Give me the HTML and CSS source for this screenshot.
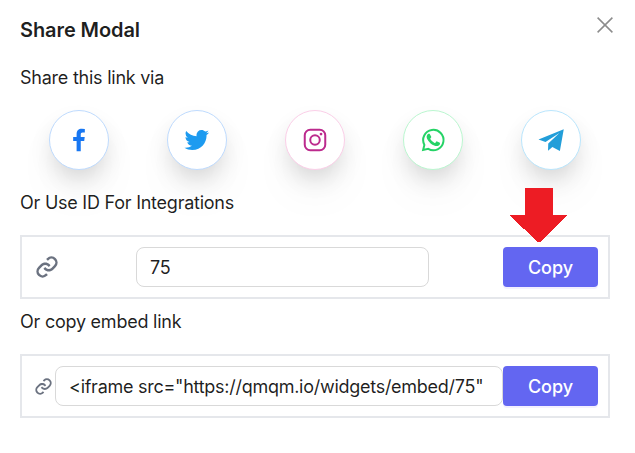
FILE: index.html
```
<!DOCTYPE html>
<html lang="en">
<head>
  <meta charset="UTF-8">
  <title>Share Modal</title>
  <link rel="stylesheet" href="styles.css">
</head>
<body>
  <div class="modal">
    <div class="modal-header">
      <h1>Share Modal</h1>
      <button class="close-btn" aria-label="Close">
        <svg width="16" height="16" viewBox="0 0 16 16"><path d="M.6.6l14.8 14.8M15.4.6L.6 15.4"/></svg>
      </button>
    </div>

    <p class="label">Share this link via</p>
    <div class="social">
      <a class="icon facebook" href="#">
        <svg viewBox="0 0 24 24"><path d="M13.397 20.997v-8.196h2.765l.411-3.209h-3.176V7.548c0-.926.258-1.56 1.587-1.56h1.684V3.127A22.336 22.336 0 0 0 14.201 3c-2.444 0-4.122 1.492-4.122 4.231v2.355H7.332v3.209h2.753v8.202h3.312z"/></svg>
      </a>
      <a class="icon twitter" href="#">
        <svg viewBox="0 0 24 24"><path d="M19.633 7.997c.013.175.013.349.013.523 0 5.325-4.053 11.461-11.46 11.461-2.282 0-4.402-.661-6.186-1.809.324.037.636.05.973.05a8.07 8.07 0 0 0 5.001-1.721 4.036 4.036 0 0 1-3.767-2.793c.249.037.499.062.761.062.361 0 .724-.05 1.061-.137a4.027 4.027 0 0 1-3.23-3.953v-.05c.537.299 1.16.486 1.82.511a4.022 4.022 0 0 1-1.796-3.354c0-.748.199-1.434.548-2.032a11.457 11.457 0 0 0 8.306 4.215c-.062-.3-.1-.611-.1-.923a4.026 4.026 0 0 1 4.028-4.028c1.16 0 2.207.486 2.943 1.272a7.957 7.957 0 0 0 2.556-.973 4.02 4.02 0 0 1-1.771 2.22 8.073 8.073 0 0 0 2.319-.624 8.645 8.645 0 0 1-2.019 2.083z"/></svg>
      </a>
      <a class="icon instagram" href="#">
        <svg viewBox="0 0 24 24">
          <rect class="line" x="3.8" y="3.8" width="16.4" height="16.4" rx="4.4"/>
          <circle class="line" cx="12" cy="12" r="3.8"/>
          <circle cx="16.8" cy="7.2" r="1.1"/>
        </svg>
      </a>
      <a class="icon whatsapp" href="#">
        <svg viewBox="0 0 24 24">
          <path class="line" d="M4.1 20l1-4.1A8.15 8.15 0 1 1 8.2 19.1z"/>
          <path d="M9.6 7.5c-.2-.5-.4-.5-.6-.5h-.5c-.2 0-.5.1-.7.3-.3.3-.9.9-.9 2.1s.9 2.5 1.1 2.7c.1.2 1.8 2.9 4.5 4 2.2.9 2.7.7 3.2.6.5 0 1.5-.6 1.7-1.2.2-.6.2-1.1.2-1.2-.1-.2-.3-.2-.5-.3l-1.8-.9c-.2-.1-.4-.1-.6.1l-.8 1c-.1.2-.3.2-.6.1a7 7 0 0 1-3.5-3.1c-.1-.2 0-.4.1-.5l.4-.5.3-.4v-.5z"/>
        </svg>
      </a>
      <a class="icon telegram" href="#">
        <svg viewBox="0 0 24 24"><path d="M22.2 3.4L2 11.5l5.600 2.100L18.700 6.300 9.800 14.700l-.2 5.800 3.500-2.900 6 3.200z"/></svg>
      </a>
    </div>

    <p class="label">Or Use ID For Integrations</p>
    <div class="field">
      <svg class="link-icon" viewBox="0 0 24 24">
        <path d="M8.465 11.293c1.133-1.133 3.109-1.133 4.242 0l.707.707 1.414-1.414-.707-.707c-.943-.944-2.199-1.465-3.535-1.465s-2.592.521-3.535 1.465L4.929 12a5.008 5.008 0 0 0 0 7.071 4.983 4.983 0 0 0 3.535 1.462A4.982 4.982 0 0 0 12 19.071l.707-.707-1.414-1.414-.707.707a3.007 3.007 0 0 1-4.243 0 3.005 3.005 0 0 1 0-4.243l2.122-2.121z"/>
        <path d="m12 4.929-.707.707 1.414 1.414.707-.707a3.007 3.007 0 0 1 4.243 0 3.005 3.005 0 0 1 0 4.243l-2.122 2.121c-1.133 1.133-3.109 1.133-4.242 0L10.586 12l-1.414 1.414.707.707c.943.944 2.199 1.465 3.535 1.465s2.592-.521 3.535-1.465L19.071 12a5.008 5.008 0 0 0 0-7.071 5.006 5.006 0 0 0-7.071 0z"/>
      </svg>
      <input class="id-input" type="text" value="75">
      <button class="copy-btn">Copy</button>
      <!-- points at the first copy button -->
      <svg class="arrow" width="57" height="54" viewBox="0 0 57 54"><path d="M15 0h28v27h14v1L30 54h-2L0 28v-1h15z"/></svg>
    </div>

    <p class="label embed-label">Or copy embed link</p>
    <div class="field">
      <svg class="link-icon small" viewBox="0 0 24 24">
        <path d="M8.465 11.293c1.133-1.133 3.109-1.133 4.242 0l.707.707 1.414-1.414-.707-.707c-.943-.944-2.199-1.465-3.535-1.465s-2.592.521-3.535 1.465L4.929 12a5.008 5.008 0 0 0 0 7.071 4.983 4.983 0 0 0 3.535 1.462A4.982 4.982 0 0 0 12 19.071l.707-.707-1.414-1.414-.707.707a3.007 3.007 0 0 1-4.243 0 3.005 3.005 0 0 1 0-4.243l2.122-2.121z"/>
        <path d="m12 4.929-.707.707 1.414 1.414.707-.707a3.007 3.007 0 0 1 4.243 0 3.005 3.005 0 0 1 0 4.243l-2.122 2.121c-1.133 1.133-3.109 1.133-4.242 0L10.586 12l-1.414 1.414.707.707c.943.944 2.199 1.465 3.535 1.465s2.592-.521 3.535-1.465L19.071 12a5.008 5.008 0 0 0 0-7.071 5.006 5.006 0 0 0-7.071 0z"/>
      </svg>
      <input class="embed-input" type="text" value="&lt;iframe src=&quot;https://qmqm.io/widgets/embed/75&quot;">
      <button class="copy-btn">Copy</button>
    </div>
  </div>
</body>
</html>
```
FILE: styles.css
```
* {
  box-sizing: border-box;
}

body {
  margin: 0;
  background: #fff;
  color: rgba(0, 0, 0, 0.88);
  font-family: Inter, sans-serif;
  font-size: 18px;
  line-height: 28px;
}

.modal {
  padding: 16px 25px 0 20px;
}

.modal-header {
  display: flex;
  justify-content: space-between;
  height: 48px;
}

.modal-header h1 {
  margin: 0;
  font-size: 20px;
  font-weight: 600;
  line-height: 28px;
  letter-spacing: -0.09px;
}

.close-btn {
  width: 16px;
  height: 16px;
  margin: 1px -3px 0 0;
  padding: 0;
  border: none;
  background: none;
  cursor: pointer;
}

.close-btn svg {
  display: block;
  fill: none;
  stroke: #8c8c8c;
  stroke-width: 1.5;
}

.label {
  margin: 0;
  height: 28px;
  letter-spacing: -0.24px;
}

.social {
  display: flex;
  justify-content: space-around;
  margin: 18px 0 19px;
}

.icon {
  display: flex;
  align-items: center;
  justify-content: center;
  width: 60px;
  height: 60px;
  background: #fff;
  border: 1px solid;
  border-radius: 50%;
  box-shadow: 0 25px 50px -12px rgba(0, 0, 0, 0.1), 0 12px 25px -5px rgba(0, 0, 0, 0.17);
}

.icon svg {
  width: 30px;
  height: 30px;
  fill: currentColor;
}

.icon .line {
  fill: none;
  stroke: currentColor;
  stroke-width: 1.6;
}

.facebook {
  color: #1877f2;
  border-color: #bfdbfe;
}

.twitter {
  color: #1d9bf0;
  border-color: #bfdbfe;
}

.instagram {
  color: #bc2a8d;
  border-color: #fbcfe8;
}

.whatsapp {
  color: #25d366;
  border-color: #bbf7d0;
}

.telegram {
  color: #229ed9;
  border-color: #bae6fd;
}

.field {
  position: relative;
  display: flex;
  align-items: center;
  justify-content: space-between;
  height: 64px;
  margin-top: 18px;
  padding: 0 10px;
  border: 2px solid #e5e7eb;
}

.link-icon {
  flex: none;
  width: 30px;
  height: 30px;
  fill: #6b7280;
}

.link-icon.small {
  width: 23px;
  height: 23px;
}

.field input {
  width: 293px;
  height: 40px;
  padding: 0 13px;
  border: 1px solid #d9d9d9;
  border-radius: 8px;
  background: #fff;
  color: rgba(0, 0, 0, 0.88);
  font: inherit;
  letter-spacing: -0.27px;
  outline: none;
}

.field .embed-input {
  flex: 1;
}

.copy-btn {
  width: 95px;
  height: 40px;
  padding: 2px 0 0;
  border: none;
  border-radius: 4px;
  background: #6366f1;
  box-shadow: 0 2px 0 rgba(55, 5, 255, 0.06);
  color: #fff;
  font: inherit;
  font-weight: 500;
  cursor: pointer;
}

.label.embed-label {
  margin-top: 9px;
}

.arrow {
  position: absolute;
  top: -49px;
  right: 41px;
  fill: #ed1c24;
  shape-rendering: crispEdges;
}
```
